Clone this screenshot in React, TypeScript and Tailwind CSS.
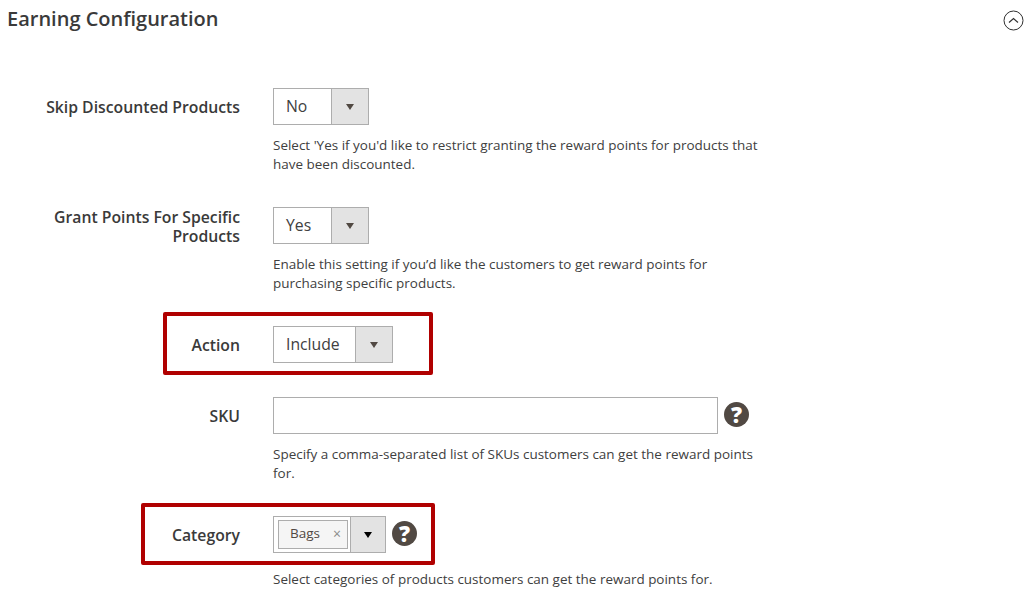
import React from 'react';

const Caret = ({ dark }: { dark?: boolean }) => (
  <span className={`w-0 h-0 border-x-[4.5px] border-x-transparent border-t-[6px] ${dark ? 'border-t-black' : 'border-t-[#514943]'}`} />
);

const Select = ({ value, width }: { value: string; width: string }) => (
  <div className={`flex h-[37px] border border-[#adadad] bg-white ${width}`}>
    <div className="flex-1 pl-3 leading-[35px] text-[15.75px] text-[#404040]">{value}</div>
    <div className="w-[37px] flex items-center justify-center bg-[#e3e3e3] border-l border-[#adadad]">
      <Caret />
    </div>
  </div>
);

const Help = () => (
  <div className="ml-[6px] mt-[5px] w-[25px] h-[25px] rounded-full bg-[#514943] text-center text-[22px] leading-[25px] font-extrabold text-white">
    ?
  </div>
);

const Row = ({
  label,
  note,
  noteGap = 'mt-[11px]',
  labelTop = 'pt-[10px]',
  children,
  highlight,
}: {
  label: string;
  note?: string;
  noteGap?: string;
  labelTop?: string;
  children: React.ReactNode;
  highlight?: string;
}) => (
  <div className="relative flex pb-[34px]">
    {highlight && <div className={`absolute border-4 border-[#b00000] rounded-[2px] ${highlight}`} />}
    <div className={`w-[240px] text-right text-[15.75px] leading-[19px] font-semibold text-[#3a3a3a] ${labelTop}`}>{label}</div>
    <div className="ml-[33px] w-[490px] relative">
      <div className="flex">{children}</div>
      {note && <p className={`text-[13.48px] leading-[18.5px] text-[#404040] ${noteGap}`}>{note}</p>}
    </div>
  </div>
);

export default function App() {
  return (
    <div className="w-[1035px] h-[594px] overflow-hidden bg-white font-['Open_Sans',sans-serif] relative">
      <div className="flex items-start justify-between pl-[7px] pr-[11px] pt-[5px] h-[88px]">
        <h2 className="text-[20px] leading-[27px] font-semibold text-[#3a3a3a]">Earning Configuration</h2>
        <svg className="mt-[5px]" width="21" height="21" viewBox="0 0 21 21" fill="none" stroke="#303030">
          <circle cx="10.5" cy="10.5" r="9.5" strokeWidth="1" />
          <path d="M6 12.5l4.5-4 4.5 4" strokeWidth="1.2" />
        </svg>
      </div>

      <Row
        label="Skip Discounted Products"
        note="Select 'Yes if you'd like to restrict granting the reward points for products that have been discounted."
      >
        <Select value="No" width="w-[96px]" />
      </Row>

      <Row
        label="Grant Points For Specific Products"
        labelTop="pt-[1px]"
        note="Enable this setting if you’d like the customers to get reward points for purchasing specific products."
      >
        <Select value="Yes" width="w-[96px]" />
      </Row>

      <Row label="Action" highlight="left-[163px] w-[270px] top-[-14px] h-[63px]">
        <Select value="Include" width="w-[120px]" />
      </Row>

      <Row label="SKU" note="Specify a comma-separated list of SKUs customers can get the reward points for.">
        <input className="h-[37px] w-[445px] border border-[#adadad] bg-white" />
        <Help />
      </Row>

      <Row
        label="Category"
        highlight="left-[141px] w-[294px] top-[-13px] h-[62px]"
        noteGap="mt-[17px]"
        note="Select categories of products customers can get the reward points for."
      >
        <div className="flex h-[37px] w-[113px] border border-[#adadad] bg-white">
          <div className="flex-1 pl-1 pt-[3px]">
            <div className="flex items-center h-[29px] w-[70px] border border-[#adadad] bg-[#f5f5f5] pl-[11px] pb-[2px] text-[13.5px] text-[#514943]">
              Bags
              <span className="ml-[13px] text-[14px] leading-none text-[#8a8a8a]">×</span>
            </div>
          </div>
          <div className="w-[35px] flex items-center justify-center bg-[#e3e3e3] border-l border-[#adadad]">
            <Caret dark />
          </div>
        </div>
        <Help />
      </Row>
    </div>
  );
}
